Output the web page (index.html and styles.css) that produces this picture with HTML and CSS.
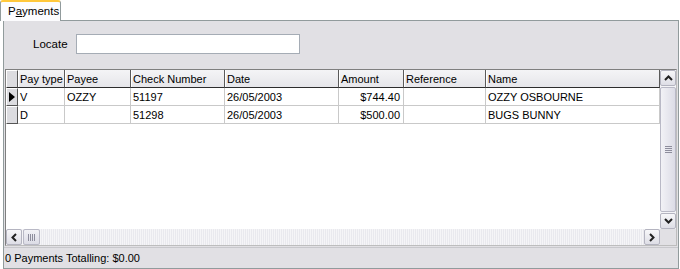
FILE: index.html
```html
<!DOCTYPE html>
<html lang="en">
<head>
    <meta charset="UTF-8">
    <title>Payments</title>
    <link rel="stylesheet" href="styles.css">
</head>
<body>
    <div class="tabs">
        <div class="tab">P<u>a</u>yments</div>
    </div>

    <div class="panel">
        <div class="locate">
            <label for="loc">Locate</label>
            <input id="loc" type="text">
        </div>

        <div class="grid">
            <div class="content">
                <div class="row head">
                    <div class="ind"></div>
                    <div class="cell">Pay type</div>
                    <div class="cell">Payee</div>
                    <div class="cell">Check Number</div>
                    <div class="cell">Date</div>
                    <div class="cell">Amount</div>
                    <div class="cell">Reference</div>
                    <div class="cell">Name</div>
                </div>
                <div class="row">
                    <div class="ind current"><span class="tri"></span></div>
                    <div class="cell">V</div>
                    <div class="cell">OZZY</div>
                    <div class="cell">51197</div>
                    <div class="cell">26/05/2003</div>
                    <div class="cell num">$744.40</div>
                    <div class="cell"></div>
                    <div class="cell">OZZY OSBOURNE</div>
                </div>
                <div class="row">
                    <div class="ind"></div>
                    <div class="cell">D</div>
                    <div class="cell"></div>
                    <div class="cell">51298</div>
                    <div class="cell">26/05/2003</div>
                    <div class="cell num">$500.00</div>
                    <div class="cell"></div>
                    <div class="cell">BUGS BUNNY</div>
                </div>
            </div>

            <div class="vscroll">
                <div class="sbtn">
                    <svg width="9" height="6" viewBox="0 0 9 6"><path d="M1 5 L4.5 1.5 L8 5" fill="none" stroke="#222" stroke-width="2"/></svg>
                </div>
                <div class="vthumb"><span class="grip-h"></span></div>
                <div class="sbtn">
                    <svg width="9" height="6" viewBox="0 0 9 6"><path d="M1 1 L4.5 4.5 L8 1" fill="none" stroke="#222" stroke-width="2"/></svg>
                </div>
            </div>

            <div class="hscroll">
                <div class="sbtn">
                    <svg width="6" height="9" viewBox="0 0 6 9"><path d="M5 1 L1.5 4.5 L5 8" fill="none" stroke="#222" stroke-width="2"/></svg>
                </div>
                <div class="hthumb"><span class="grip-v"></span></div>
                <div class="htrack"></div>
                <div class="sbtn">
                    <svg width="6" height="9" viewBox="0 0 6 9"><path d="M1 1 L4.5 4.5 L1 8" fill="none" stroke="#222" stroke-width="2"/></svg>
                </div>
            </div>

            <div class="corner"></div>
        </div>

        <div class="status">0 Payments Totalling: $0.00</div>
    </div>
</body>
</html>
```

FILE: styles.css
```css
html, body { margin: 0; padding: 0; }
body { width: 680px; height: 269px; background: #fff; font-family: "Liberation Sans", Arial, sans-serif; font-size: 11px; color: #000; overflow: hidden; }

.tabs { height: 20px; display: flex; }
.tab { width: 61px; height: 21px; border: 1px solid #919b9c; border-bottom: none; border-top: 2px solid #ffc83c; border-radius: 3px 3px 0 0; background: #fcfcfe; box-sizing: border-box; padding: 3px 0 0 7px; position: relative; z-index: 1; font-size: 11.5px; }
.tab u { text-decoration: underline; }

.panel { margin: 0 1px 0 3px; height: 249px; border: 1px solid #919b9c; background: #e1e0e4; box-sizing: border-box; display: flex; flex-direction: column; }

.locate { display: flex; align-items: center; height: 20px; margin: 13px 0 15px 29px; gap: 10px; }
.locate label { width: 33px; font-size: 11.5px; }
.locate input { width: 224px; height: 20px; box-sizing: border-box; border: 1px solid #a5acb5; background: #fff; margin: 0; padding: 0 3px; font: inherit; }

.grid { margin: 0 1px; height: 177px; border: 1px solid #7f7f7f; border-right-color: #bdbdbd; border-bottom-color: #bdbdbd; background: #fff; display: grid; grid-template-columns: 654px 16px; grid-template-rows: 159px 16px; box-sizing: border-box; width: 672px; }

.content { overflow: hidden; }
.row { display: grid; grid-template-columns: 12px 47px 66px 94px 114px 65px 82px 174px; height: 18px; }
.cell { border-right: 1px solid #c9c9c9; border-bottom: 1px solid #c9c9c9; padding: 3px 2px 0 2px; box-sizing: border-box; white-space: nowrap; overflow: hidden; }
.cell.num { text-align: right; padding-right: 3px; }

.row.head { height: 18px; }
.row.head .cell { background: linear-gradient(#f4f4f6, #e6e6ea); border-right: 1px solid #5a5a5a; border-bottom: 1px solid #2d2d2d; box-shadow: inset 1px 0 #fff; }

.ind { background: #dcdce0; border-top: 1px solid #fff; border-left: 1px solid #fff; border-right: 1px solid #555; border-bottom: 1px solid #555; box-sizing: border-box; display: flex; align-items: center; padding-left: 2px; }
.row.head .ind { border-bottom-color: #2d2d2d; }
.tri { width: 0; height: 0; border-top: 5px solid transparent; border-bottom: 5px solid transparent; border-left: 6px solid #000; }

.vscroll { display: flex; flex-direction: column; background: #f4f4f7; }
.hscroll { display: flex; background: repeating-linear-gradient(90deg, #f5f5f7 0 1px, #e9e9ee 1px 2px); }
.corner { background: #e1e0e4; }

.sbtn { width: 16px; height: 16px; flex: none; box-sizing: border-box; border: 1px solid #b4b4c0; border-radius: 2px; background: linear-gradient(#f7f7f9, #dedee6); display: flex; align-items: center; justify-content: center; }
.vthumb { flex: 1; margin: 1px 0; border: 1px solid #b9b9c6; border-radius: 2px; background: linear-gradient(90deg, #f2f2f6, #dcdce6); display: flex; align-items: center; justify-content: center; }
.hthumb { width: 17px; flex: none; margin: 0 1px; border: 1px solid #b9b9c6; border-radius: 2px; background: linear-gradient(#f2f2f6, #dcdce6); display: flex; align-items: center; justify-content: center; box-sizing: border-box; }
.htrack { flex: 1; }

.grip-h { width: 7px; height: 7px; background: repeating-linear-gradient(#8d8d9c 0 1px, transparent 1px 2px); }
.grip-v { width: 7px; height: 7px; background: repeating-linear-gradient(90deg, #8d8d9c 0 1px, transparent 1px 2px); }

.status { margin: 1px 0 0 0; border-top: 1px solid #c8c8cc; padding: 4px 0 0 1px; flex: 1; }
```
